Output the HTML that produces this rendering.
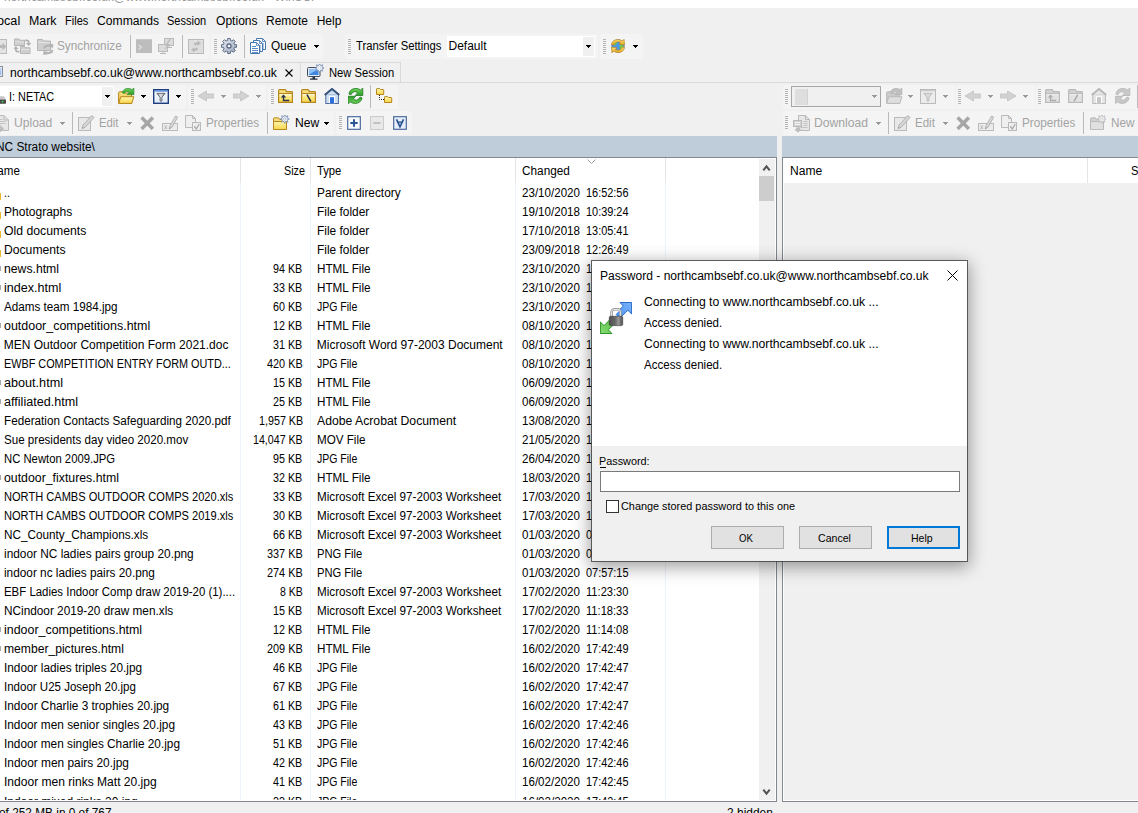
<!DOCTYPE html>
<html lang="en"><head><meta charset="utf-8"><title>WinSCP</title>
<style>

html,body{margin:0;padding:0;}
body{width:1138px;height:813px;overflow:hidden;background:#f0f0f0;font-family:"Liberation Sans",sans-serif;}
#app{position:relative;width:1138px;height:813px;overflow:hidden;background:#f0f0f0;}
#app div,#app span,#app svg,#app button,#app input,#app label{position:absolute;}
#app button,#app input{margin:0;padding:0;font:inherit;-webkit-appearance:none;appearance:none;outline:none;border-radius:0;}
.t{white-space:pre;transform-origin:0 0;color:#000;}
.dis{color:#a3a3a3;}
.vsep{width:1px;background:#b9b9b9;}
.grip{width:3px;background:repeating-linear-gradient(to bottom,#b4b4b4 0,#b4b4b4 1px,transparent 1px,transparent 2px);}
.hl{height:1px;background:#dadada;}
.panel{background:#fff;border:1px solid #828790;box-sizing:border-box;}
.colh{width:1px;background:#e5e5e5;}
.coll{width:1px;background:#eef4fb;}
.btn{box-sizing:border-box;background:#e1e1e1;border:1px solid #adadad;}

</style></head>
<body>
<div id="app">
<svg width="0" height="0" style="left:0;top:0"><defs><linearGradient id="gy" x1="0" y1="0" x2="0" y2="1"><stop offset="0" stop-color="#fff6ae"/><stop offset="1" stop-color="#f8d548"/></linearGradient><linearGradient id="gyb" x1="0" y1="0" x2="0" y2="1"><stop offset="0" stop-color="#fbe38a"/><stop offset="1" stop-color="#e9b935"/></linearGradient><linearGradient id="gd" x1="0" y1="0" x2="0" y2="1"><stop offset="0" stop-color="#e9e9e9"/><stop offset="1" stop-color="#cdcdcd"/></linearGradient><linearGradient id="gg" x1="0" y1="0" x2="1" y2="1"><stop offset="0" stop-color="#f2f4f8"/><stop offset="1" stop-color="#94a0b6"/></linearGradient><linearGradient id="gf" x1="0" y1="0" x2="0" y2="1"><stop offset="0" stop-color="#ffffff"/><stop offset="1" stop-color="#dde9f8"/></linearGradient><linearGradient id="gfu" x1="0" y1="0" x2="1" y2="0"><stop offset="0" stop-color="#8f959d"/><stop offset=".5" stop-color="#dfe2e6"/><stop offset="1" stop-color="#7d838b"/></linearGradient><linearGradient id="ggr" x1="0" y1="0" x2="0" y2="1"><stop offset="0" stop-color="#6fd45a"/><stop offset="1" stop-color="#2f9a2c"/></linearGradient><linearGradient id="gar" x1="0" y1="0" x2="0" y2="1"><stop offset="0" stop-color="#ffe27a"/><stop offset="1" stop-color="#e8a91c"/></linearGradient></defs></svg>
<div style="left:-5px;top:34px;width:214px;height:25px;background:#f4f4f4;border-radius:3px"></div>
<div style="left:211px;top:34px;width:112px;height:25px;background:#f4f4f4;border-radius:3px"></div>
<div style="left:345px;top:34px;width:253px;height:25px;background:#f4f4f4;border-radius:3px"></div>
<div style="left:600px;top:34px;width:43px;height:25px;background:#f4f4f4;border-radius:3px"></div>
<div style="left:-5px;top:85px;width:191px;height:24px;background:#f4f4f4;border-radius:3px"></div>
<div style="left:188px;top:85px;width:78px;height:24px;background:#f4f4f4;border-radius:3px"></div>
<div style="left:268px;top:85px;width:130px;height:24px;background:#f4f4f4;border-radius:3px"></div>
<div style="left:-5px;top:111px;width:339px;height:24px;background:#f4f4f4;border-radius:3px"></div>
<div style="left:336px;top:111px;width:76px;height:24px;background:#f4f4f4;border-radius:3px"></div>
<div style="left:783px;top:85px;width:172px;height:24px;background:#f4f4f4;border-radius:3px"></div>
<div style="left:956px;top:85px;width:79px;height:24px;background:#f4f4f4;border-radius:3px"></div>
<div style="left:1036px;top:85px;width:109px;height:24px;background:#f4f4f4;border-radius:3px"></div>
<div style="left:783px;top:111px;width:362px;height:24px;background:#f4f4f4;border-radius:3px"></div>
<div style="left:0px;top:0px;width:1138px;height:8px;background:#fff;"></div>
<span class="t" id="t0" style="top:-10.16px;font-size:12px;line-height:14px;color:#999;left:4.20px;transform:scaleX(0.9852);">northcambsebf.co.uk@www.northcambsebf.co.uk - WinSCP</span>
<span class="t" id="t1" style="top:13.84px;font-size:12px;line-height:14px;left:-10.30px;transform:scaleX(1.0527);">Local</span>
<span class="t" id="t2" style="top:13.84px;font-size:12px;line-height:14px;left:28.60px;transform:scaleX(1.0310);">Mark</span>
<span class="t" id="t3" style="top:13.84px;font-size:12px;line-height:14px;left:64.70px;transform:scaleX(0.9194);">Files</span>
<span class="t" id="t4" style="top:13.84px;font-size:12px;line-height:14px;left:96.70px;transform:scaleX(1.0121);">Commands</span>
<span class="t" id="t5" style="top:13.84px;font-size:12px;line-height:14px;left:167.20px;transform:scaleX(0.9180);">Session</span>
<span class="t" id="t6" style="top:13.84px;font-size:12px;line-height:14px;left:215.50px;transform:scaleX(1.0058);">Options</span>
<span class="t" id="t7" style="top:13.84px;font-size:12px;line-height:14px;left:266.20px;transform:scaleX(0.9969);">Remote</span>
<span class="t" id="t8" style="top:13.84px;font-size:12px;line-height:14px;left:316.70px;">Help</span>
<svg style="left:-9px;top:38px" width="16" height="16" viewBox="0 0 16 16"><rect x="0.500" y="1.500" width="15" height="14" fill="#e4e4e4" stroke="#bababa"/><path d="M7 7h4.500v-2.500l4 4-4 4v-2.500h-4.500z" fill="#bababa"/></svg>
<svg style="left:14px;top:38px" width="17" height="16" viewBox="0 0 17 16"><path d="M0.5 7.5V1H4.95L6.05 2.3H10.5V7.5Z" fill="#cfcfcf" stroke="#b6b6b6"/><path d="M1 4H10" stroke="#e2e2e2"/><path d="M6.5 15.5V8.5H10.725L11.775 9.8H16V15.5Z" fill="#cfcfcf" stroke="#b6b6b6"/><path d="M7 11.5H15.5" stroke="#e2e2e2"/><path d="M11 2.300h1.500q2.200 0 2.200 2.200v1" fill="none" stroke="#b2b2b2" stroke-width="1.800"/><path d="M11.900 5h5.600l-2.800 3z" fill="#b2b2b2"/><path d="M5.500 13.700h-1.500q-2.200 0-2.200-2.200v-1" fill="none" stroke="#b2b2b2" stroke-width="1.800"/><path d="M-1 11h5.600l-2.800-3z" fill="#b2b2b2"/></svg>
<svg style="left:37px;top:38px" width="17" height="17" viewBox="0 0 17 17"><path d="M0.500 12.500V1.500H5.500L6.500 3H13.500V12.500Z" fill="#cfcfcf" stroke="#b6b6b6"/><path d="M1 4.500H13" stroke="#e2e2e2"/><path d="M7 10.500a4.300 3.300 0 0 1 7.300-2" fill="none" stroke="#b2b2b2" stroke-width="2"/><path d="M12 6l4.500.3-1 4.500z" fill="#b2b2b2"/><path d="M15.500 12a4.300 3.300 0 0 1-7.300 2" fill="none" stroke="#b2b2b2" stroke-width="2"/><path d="M10.500 16.700l-4.500-.3 1-4.500z" fill="#b2b2b2"/></svg>
<span class="t dis" id="t9" style="top:38.84px;font-size:12px;line-height:14px;left:57.20px;transform:scaleX(0.9796);">Synchronize</span>
<div class="vsep" style="left:130px;top:35px;height:23px;"></div>
<svg style="left:136px;top:38px" width="16" height="16" viewBox="0 0 16 16"><rect x="0" y="1" width="16" height="14" fill="#bdbdbd"/><rect x="0" y="1" width="16" height="1" fill="#c9c9c9"/><path d="M2.500 7l3 2.300-3 2.300" fill="none" stroke="#e0e0e0" stroke-width="1.200"/></svg>
<svg style="left:158px;top:38px" width="16" height="16" viewBox="0 0 16 16"><rect x="6.500" y="0.500" width="9" height="7" fill="#dcdcdc" stroke="#bababa"/><rect x="0.500" y="6.500" width="9" height="7" fill="#dcdcdc" stroke="#bababa"/><path d="M5 14v1.500M2 15.500h6M11 8v1.500M9.500 9.500h4.500" stroke="#bababa" fill="none"/><path d="M11.500 1l-4.500 6.500h2l-3.500 5.500 6.500-7h-2.500l3.500-5z" fill="#b9b9b9"/></svg>
<div class="vsep" style="left:182px;top:35px;height:23px;"></div>
<svg style="left:188px;top:38px" width="16" height="16" viewBox="0 0 16 16"><rect x="0.500" y="1.500" width="15" height="14" fill="#dedede" stroke="#bababa"/><path d="M8 2v13" stroke="#ececec"/><path d="M6 6.500q0-2.500 3.500-2.500v-1.500l3.500 2.800-3.500 2.800v-1.600q-1.800 0-1.800 1.500z" fill="#bababa"/><path d="M10 10.500q0 2.500-3.500 2.500v1.500l-3.500-2.800 3.500-2.800v1.600q1.800 0 1.800-1.500z" fill="#bababa"/></svg>
<div class="grip" style="left:214px;top:39px;height:15px"></div>
<svg style="left:221px;top:38px" width="16" height="16" viewBox="0 0 16 16"><path d="M6.70 0.41L9.30 0.41L9.35 2.46L10.96 3.13L12.45 1.71L14.29 3.55L12.87 5.04L13.54 6.65L15.59 6.70L15.59 9.30L13.54 9.35L12.87 10.96L14.29 12.45L12.45 14.29L10.96 12.87L9.35 13.54L9.30 15.59L6.70 15.59L6.65 13.54L5.04 12.87L3.55 14.29L1.71 12.45L3.13 10.96L2.46 9.35L0.41 9.30L0.41 6.70L2.46 6.65L3.13 5.04L1.71 3.55L3.55 1.71L5.04 3.13L6.65 2.46Z" fill="url(#gg)" stroke="#596985" stroke-width="1" stroke-linejoin="round"/><circle cx="8" cy="8" r="2" fill="#fafafa" stroke="#596985" stroke-width="1.300"/></svg>
<div class="vsep" style="left:244px;top:35px;height:23px;"></div>
<svg style="left:249.5px;top:38px" width="16.5" height="16" viewBox="0 0 16.5 16"><path d="M6.5 0.5H12.5L15.5 3.5V11.5H6.5Z" fill="#fdfeff" stroke="#4878b0" stroke-width="1"/><path d="M12.5 0.5V3.5H15.5" fill="none" stroke="#4878b0" stroke-width=".8"/><path d="M13.500 5.500v5" stroke="#5a88c2" stroke-dasharray="1 1"/><path d="M3.5 2.5H9.5L12.5 5.5V13.5H3.5Z" fill="#fdfeff" stroke="#4878b0" stroke-width="1"/><path d="M9.5 2.5V5.5H12.5" fill="none" stroke="#4878b0" stroke-width=".8"/><path d="M10.500 7.500v5" stroke="#5a88c2" stroke-dasharray="1 1"/><path d="M0.5 4.5H6.5L9.5 7.5V15.5H0.5Z" fill="#fdfeff" stroke="#4878b0" stroke-width="1"/><path d="M6.5 4.5V7.5H9.5" fill="none" stroke="#4878b0" stroke-width=".8"/><path d="M2 8.5H6" stroke="#5a88c2"/><path d="M2 10.5H8" stroke="#5a88c2"/><path d="M2 12.5H8" stroke="#5a88c2"/><path d="M2 14.5H8" stroke="#5a88c2"/></svg>
<span class="t" id="t10" style="top:38.84px;font-size:12px;line-height:14px;left:270.50px;transform:scaleX(0.9825);">Queue</span>
<svg style="left:314px;top:45px" width="5" height="3" viewBox="0 0 5 3"><path d="M0 0h5v1h-1v1h-1v1h-1v-1h-1v-1h-1z" fill="#000" shape-rendering="crispEdges"/></svg>
<div class="grip" style="left:347.5px;top:39px;height:15px"></div>
<span class="t" id="t11" style="top:38.84px;font-size:12px;line-height:14px;left:356.00px;transform:scaleX(0.9391);">Transfer Settings</span>
<div style="left:447px;top:36px;width:148px;height:21px;background:#fff;"></div>
<div style="left:583px;top:37px;width:11px;height:19px;background:#f0f0f0;"></div>
<span class="t" id="t12" style="top:38.84px;font-size:12px;line-height:14px;left:448.50px;">Default</span>
<svg style="left:586px;top:45px" width="5" height="3" viewBox="0 0 5 3"><path d="M0 0h5v1h-1v1h-1v1h-1v-1h-1v-1h-1z" fill="#000" shape-rendering="crispEdges"/></svg>
<div class="grip" style="left:603px;top:39px;height:15px"></div>
<svg style="left:610px;top:38px" width="16" height="16" viewBox="0 0 16 16"><circle cx="8" cy="8" r="6.200" fill="#4a97ee" stroke="#2f6fc0" stroke-width=".6"/><path d="M3 6q1-2.500 3.500-3 1.500 1 .5 2.500-1 .5-1.500 2-1.500.5-2.500-1.500zM9.500 7.500q2-1 4 0 .5 2-1 4-1.500 1-2.500-.5-1-2-.5-3.500z" fill="#6ccb52"/><path d="M1.500 6.800q.5-4.800 6-5.300 3 0 4.800 1.500l1.700-1.700.5 5.700-5.500-.8 1.600-1.500q-2-1.500-4.500-.5-1.800 1-1.800 2.600z" fill="url(#gar)" stroke="#b8801a" stroke-width=".7"/><path d="M14.500 9.200q-.5 4.800-6 5.300-3 0-4.800-1.500l-1.700 1.700-.5-5.700 5.500.8-1.600 1.500q2 1.500 4.500.5 1.800-1 1.800-2.600z" fill="url(#gar)" stroke="#b8801a" stroke-width=".7"/></svg>
<svg style="left:633px;top:45px" width="5" height="3" viewBox="0 0 5 3"><path d="M0 0h5v1h-1v1h-1v1h-1v-1h-1v-1h-1z" fill="#000" shape-rendering="crispEdges"/></svg>
<div class="hl" style="left:0;top:62px;width:400px"></div>
<div class="hl" style="left:0;top:82px;width:1138px"></div>
<div class="vsep" style="left:300px;top:62px;height:20px;background:#dadada;"></div>
<div class="vsep" style="left:400px;top:62px;height:20px;background:#dadada;"></div>
<svg style="left:-13px;top:63.7px" width="16" height="16" viewBox="0 0 16 16"><rect x="0.500" y="2.500" width="15" height="10" fill="#e6ebf4" stroke="#8a8f9a"/><rect x="2" y="4" width="12.300" height="7" fill="#9fbff0"/><rect x="2" y="4" width="12.300" height="3" fill="#bcd3f6"/></svg>
<span class="t" id="t13" style="top:65.84px;font-size:12px;line-height:14px;left:9.70px;transform:scaleX(1.0124);">northcambsebf.co.uk@www.northcambsebf.co.uk</span>
<svg style="left:285px;top:69px" width="8" height="8" viewBox="0 0 8 8"><path d="M0.5 0.5L7.5 7.5M7.5 0.5L0.5 7.5" stroke="#000" stroke-width="1.1" fill="none"/></svg>
<svg style="left:306.5px;top:64px" width="17" height="16" viewBox="0 0 17 16"><rect x="0.500" y="3.500" width="12.500" height="9" rx="1" fill="#e4eaf4" stroke="#3f4a5e"/><rect x="2" y="5" width="9.500" height="6" fill="#3f86e0"/><path d="M2 5h9.500l-9.500 5.500z" fill="#8ec0f6"/><path d="M5.500 13h2.500v1.500h2.500v1.200h-7.500v-1.200h2.500z" fill="#27303e"/><path d="M12.50 -0.50L13.46 1.69L15.68 0.82L14.81 3.04L17.00 4.00L14.81 4.96L15.68 7.18L13.46 6.31L12.50 8.50L11.54 6.31L9.32 7.18L10.19 4.96L8.00 4.00L10.19 3.04L9.32 0.82L11.54 1.69Z" fill="#ffffff" stroke="#6f87ad" stroke-width=".8"/><circle cx="12.500" cy="4" r="1.300" fill="#fff" stroke="#a9bbd6" stroke-width=".5"/></svg>
<span class="t" id="t14" style="top:65.84px;font-size:12px;line-height:14px;left:329.00px;transform:scaleX(0.9324);">New Session</span>
<div style="left:0px;top:86px;width:114px;height:21px;background:#fff;"></div>
<div style="left:102px;top:87px;width:11px;height:19px;background:#f0f0f0;"></div>
<svg style="left:-10px;top:90px" width="17" height="16" viewBox="0 0 17 16"><path d="M1 9.500l2-3.200h11l2 3.200z" fill="#c6c6c6"/><rect x="1" y="9.500" width="15" height="4.200" rx=".8" fill="#464646"/><rect x="11.700" y="11" width="1.700" height="1.300" fill="#3cf052"/></svg>
<span class="t" id="t15" style="top:89.84px;font-size:12px;line-height:14px;left:8.70px;transform:scaleX(0.9060);">I: NETAC</span>
<svg style="left:105px;top:95px" width="5" height="3" viewBox="0 0 5 3"><path d="M0 0h5v1h-1v1h-1v1h-1v-1h-1v-1h-1z" fill="#000" shape-rendering="crispEdges"/></svg>
<svg style="left:118px;top:88px" width="16.5" height="16" viewBox="0 0 16.5 16"><path d="M0.600 15.300V4.800Q0.600 3.800 1.600 3.800H5L6 5H12.800Q13.600 5 13.600 5.800V15.300Z" fill="url(#gyb)" stroke="#b5861c"/><path d="M0.700 15.400L2.800 8.700H15.800L13.800 15.400Z" fill="url(#gy)" stroke="#b5861c"/><path d="M4.200 4.800Q5.500 0.400 10 0.400Q12.500 0.400 14 1.600L15.900 0.200V6.600H9.100L11.300 4.300Q10 3.200 8.500 3.500Q6.800 4 6.400 5.400Z" fill="url(#ggr)" stroke="#2a8a27" stroke-width=".7"/></svg>
<svg style="left:141px;top:95px" width="5" height="3" viewBox="0 0 5 3"><path d="M0 0h5v1h-1v1h-1v1h-1v-1h-1v-1h-1z" fill="#000" shape-rendering="crispEdges"/></svg>
<svg style="left:153px;top:89px" width="16" height="15" viewBox="0 0 16 15"><rect x="0.7" y="0.7" width="14.6" height="13.6" fill="url(#gf)" stroke="#1d3d7c" stroke-width="1.4"/><rect x="1.4" y="1.4" width="13.2" height="1.200" fill="#3f7be0"/><path d="M3.800 4.300H12.200L8.900 8.300V12Q8 12.800 7.100 12V8.300Z" fill="url(#gfu)" stroke="#5b6068" stroke-width=".9"/></svg>
<svg style="left:176px;top:95px" width="5" height="3" viewBox="0 0 5 3"><path d="M0 0h5v1h-1v1h-1v1h-1v-1h-1v-1h-1z" fill="#000" shape-rendering="crispEdges"/></svg>
<div class="grip" style="left:191px;top:89px;height:15px"></div>
<svg style="left:198px;top:89px" width="16" height="14" viewBox="0 0 16 14"><path d="M0 7l8.500-5v3h7.500v4h-7.500v3z" fill="#d2d2d2" stroke="#c2c2c2" stroke-width=".8"/></svg>
<svg style="left:221px;top:95px" width="5" height="3" viewBox="0 0 5 3"><path d="M0 0h5v1h-1v1h-1v1h-1v-1h-1v-1h-1z" fill="#9a9a9a" shape-rendering="crispEdges"/></svg>
<svg style="left:232.7px;top:89px" width="16" height="14" viewBox="0 0 16 14"><path d="M16 7l-8.500-5v3h-7.500v4h7.500v3z" fill="#d2d2d2" stroke="#c2c2c2" stroke-width=".8"/></svg>
<svg style="left:256px;top:95px" width="5" height="3" viewBox="0 0 5 3"><path d="M0 0h5v1h-1v1h-1v1h-1v-1h-1v-1h-1z" fill="#9a9a9a" shape-rendering="crispEdges"/></svg>
<div class="grip" style="left:271px;top:89px;height:15px"></div>
<svg style="left:278px;top:88px" width="16" height="16" viewBox="0 0 16 16"><path d="M0.600 14.400V3Q0.600 1.600 1.800 1.600H6.600Q7.500 1.600 7.900 2.500L8.400 3.600H13.600Q14.400 3.600 14.400 4.400V14.400Z" fill="url(#gyb)" stroke="#b5861c" stroke-width="1.200"/><path d="M0.600 5.600H14.400V14.400H0.600Z" fill="url(#gy)" stroke="#b5861c" stroke-width="1.200"/><path d="M1.400 6.700H13.600" stroke="#fffce6" stroke-width="1"/><path d="M5.500 7.300V12.500H11.300" fill="none" stroke="#27324a" stroke-width="1.400"/><path d="M2.800 9.600L5.500 6.600 8.200 9.600Z" fill="#27324a"/></svg>
<svg style="left:301px;top:88px" width="16" height="16" viewBox="0 0 16 16"><path d="M0.600 14.400V3Q0.600 1.600 1.800 1.600H6.600Q7.500 1.600 7.900 2.500L8.400 3.600H13.600Q14.400 3.600 14.400 4.400V14.400Z" fill="url(#gyb)" stroke="#b5861c" stroke-width="1.200"/><path d="M0.600 5.600H14.400V14.400H0.600Z" fill="url(#gy)" stroke="#b5861c" stroke-width="1.200"/><path d="M1.400 6.700H13.600" stroke="#fffce6" stroke-width="1"/><path d="M6.300 7.200L9.500 12.800" stroke="#27324a" stroke-width="1.600" stroke-linecap="round"/></svg>
<svg style="left:324px;top:87.5px" width="16" height="16" viewBox="0 0 16 16"><rect x="1.800" y="6" width="12.600" height="9.500" fill="#cfe0f3" stroke="#4d6c9c" stroke-width="1"/><path d="M8 1.500L1.800 6.500H14.200Z" fill="#cfe0f3"/><rect x="5" y="8.200" width="6" height="7" fill="#ffffff"/><rect x="6" y="9.200" width="4" height="6.300" fill="#2c6fd8"/><path d="M0.700 7L8 0.900 15.300 7" fill="none" stroke="#34507a" stroke-width="1.900" stroke-linejoin="miter"/></svg>
<svg style="left:347.5px;top:88px" width="16" height="16" viewBox="0 0 16 16"><path d="M0.900 5.800Q2.200 0.400 8 0.400Q10.600 0.400 12.400 1.900L14.800 0.200V7.500H7.300L9.600 4.900Q8.300 3.400 6.300 3.700Q3.900 4.200 3.200 6.500Q1.800 7 0.900 5.800Z" fill="url(#ggr)" stroke="#1f7a1f" stroke-width=".8"/><path d="M0.900 5.800Q2.200 0.400 8 0.400Q10.600 0.400 12.400 1.900L14.800 0.200V7.500H7.300L9.600 4.900Q8.300 3.400 6.300 3.700Q3.900 4.200 3.200 6.500Q1.800 7 0.900 5.800Z" fill="url(#ggr)" stroke="#1f7a1f" stroke-width=".8" transform="rotate(180 7.500 7.900)"/></svg>
<div class="vsep" style="left:370px;top:85px;height:23px;"></div>
<svg style="left:376px;top:88px" width="16.5" height="15" viewBox="0 0 16.5 15"><path d="M0.500 6.500V1.200Q0.500 .5 1.200 .5H3.500L4.500 1.500H7Q7.700 1.500 7.700 2.200V6.500Z" fill="url(#gy)" stroke="#b5861c"/><path d="M8.500 14.500V9.200Q8.500 8.500 9.200 8.500H11.500L12.500 9.500H15Q15.700 9.500 15.700 10.200V14.500Z" fill="url(#gy)" stroke="#b5861c"/><path d="M3.500 7v4.500h5" fill="none" stroke="#222" stroke-dasharray="1 1"/></svg>
<svg style="left:-8px;top:115px" width="18" height="18" viewBox="0 0 18 18"><path d="M4.500 0.500H12L16.500 5V15.500H4.500Z" fill="#e6e6e6" stroke="#bababa"/><path d="M12 0.500V5H16.500" fill="none" stroke="#bababa"/><path d="M6.500 4.500h4M6.500 6.500h7M6.500 8.500h7" stroke="#c4c4c4"/><path d="M1 15.500v-3.500h6v-2.500l4.500 4.200-4.500 4.200v-2.400z" fill="#c0c0c0" stroke="#ababab" stroke-width=".6"/></svg>
<span class="t dis" id="t16" style="top:115.84px;font-size:12px;line-height:14px;left:13.50px;transform:scaleX(1.0071);">Upload</span>
<svg style="left:60px;top:122px" width="5" height="3" viewBox="0 0 5 3"><path d="M0 0h5v1h-1v1h-1v1h-1v-1h-1v-1h-1z" fill="#9a9a9a" shape-rendering="crispEdges"/></svg>
<div class="vsep" style="left:72px;top:112px;height:22px;"></div>
<svg style="left:78px;top:115px" width="17" height="16" viewBox="0 0 17 16"><rect x="0.500" y="2.500" width="12" height="13" fill="#e8e8e8" stroke="#bababa"/><path d="M4 13.500l1-3.300 8.300-9.200q.6-.6 1.300 0l.9.800q.6.600 0 1.300l-8.300 9.200z" fill="#d6d6d6" stroke="#ababab" stroke-width=".9"/><path d="M4 13.500l.5-1.600 1.100 1z" fill="#999"/></svg>
<span class="t dis" id="t17" style="top:115.84px;font-size:12px;line-height:14px;left:98.70px;transform:scaleX(0.9426);">Edit</span>
<svg style="left:127px;top:122px" width="5" height="3" viewBox="0 0 5 3"><path d="M0 0h5v1h-1v1h-1v1h-1v-1h-1v-1h-1z" fill="#9a9a9a" shape-rendering="crispEdges"/></svg>
<svg style="left:139.8px;top:115.7px" width="14.5" height="14.5" viewBox="0 0 14.5 14.5"><path d="M1.600 1.600L12.900 12.900M12.900 1.600L1.600 12.900" stroke="#a6a6a6" stroke-width="3.500" stroke-linecap="butt" fill="none"/></svg>
<svg style="left:162px;top:115px" width="17" height="16" viewBox="0 0 17 16"><rect x="0.500" y="8.500" width="15" height="7" fill="#ececec" stroke="#bababa"/><path d="M2.500 10.500l2.500 3.500M5 10.500l-2.500 3.500" stroke="#b0b0b0" stroke-width=".9" fill="none"/><path d="M7.300 14l.8-3.200 5.600-9.800 2 1.200-5.600 9.800z" fill="#dadada" stroke="#ababab" stroke-width=".9"/><path d="M7.300 14l.4-1.700 1 .6z" fill="#999"/></svg>
<svg style="left:185px;top:115px" width="16.5" height="16" viewBox="0 0 16.5 16"><path d="M0.500 0.500H7.500L10.500 3.500V12.500H0.500Z" fill="#efefef" stroke="#bababa"/><path d="M7.500 0.500V3.500H10.500" fill="none" stroke="#bababa"/><rect x="7.500" y="7.500" width="8" height="8" fill="#ececec" stroke="#bababa"/><path d="M9.300 11.500l2 2.300 3-4.800" fill="none" stroke="#ababab" stroke-width="1.300"/></svg>
<span class="t dis" id="t18" style="top:115.84px;font-size:12px;line-height:14px;left:205.90px;transform:scaleX(0.9689);">Properties</span>
<div class="vsep" style="left:267px;top:112px;height:22px;"></div>
<svg style="left:273px;top:114.5px" width="16.5" height="15.5" viewBox="0 0 16.5 15.5"><path d="M0.500 14.500V3.800Q0.500 2.800 1.500 2.800H5Q5.800 2.800 6.200 3.600L6.700 4.500H12.500Q13.500 4.500 13.500 5.500V14.500Z" fill="url(#gyb)" stroke="#b5861c"/><path d="M0.500 6.500H13.500V14Q13.500 14.600 12.900 14.600H1.100Q0.500 14.600 0.500 14Z" fill="url(#gy)" stroke="#b5861c"/><path d="M11.80 -0.50L12.76 1.69L14.98 0.82L14.11 3.04L16.30 4.00L14.11 4.96L14.98 7.18L12.76 6.31L11.80 8.50L10.84 6.31L8.62 7.18L9.49 4.96L7.30 4.00L9.49 3.04L8.62 0.82L10.84 1.69Z" fill="#ffffff" stroke="#6f87ad" stroke-width=".8"/><circle cx="11.800" cy="4" r="1.300" fill="#ffffff" stroke="#6f87ad" stroke-width=".5"/></svg>
<span class="t" id="t19" style="top:115.84px;font-size:12px;line-height:14px;left:294.70px;transform:scaleX(1.0077);">New</span>
<svg style="left:324px;top:122px" width="5" height="3" viewBox="0 0 5 3"><path d="M0 0h5v1h-1v1h-1v1h-1v-1h-1v-1h-1z" fill="#000" shape-rendering="crispEdges"/></svg>
<div class="grip" style="left:339px;top:116px;height:13px"></div>
<svg style="left:346.5px;top:115.5px" width="14" height="14" viewBox="0 0 14 14"><rect x="0.700" y="0.700" width="12.600" height="12.600" fill="#f9fbfe" stroke="#46659a" stroke-width="1.150"/><path d="M7 3.300v7.400M3.300 7h7.400" stroke="#2d5596" stroke-width="2"/></svg>
<svg style="left:370px;top:115.5px" width="14" height="14" viewBox="0 0 14 14"><rect x="0.500" y="0.500" width="13" height="13" fill="#e9e9e9" stroke="#cbcbcb" stroke-width="1"/><path d="M3.300 7h7.400" stroke="#c2c2c2" stroke-width="2"/></svg>
<svg style="left:392.5px;top:115.5px" width="14" height="14" viewBox="0 0 14 14"><rect x="0.700" y="0.700" width="12.600" height="12.600" fill="#e6eef9" stroke="#46659a" stroke-width="1.150"/><path d="M3.500 3.300L7 10.800 10.500 3.300" fill="none" stroke="#2d5596" stroke-width="1.700"/><path d="M4.600 6.200h4.800" stroke="#2d5596" stroke-width="1.400"/></svg>
<div class="grip" style="left:785px;top:89px;height:15px"></div>
<div style="left:791px;top:86px;width:90px;height:21px;background:#f0f0f0;border:1px solid #a6a6a6;box-sizing:border-box;"></div>
<div style="left:795px;top:89px;width:13px;height:15.5px;background:#dedede;border-right:1px solid #d2d2d2;box-sizing:border-box;"></div>
<svg style="left:872px;top:95px" width="5" height="3" viewBox="0 0 5 3"><path d="M0 0h5v1h-1v1h-1v1h-1v-1h-1v-1h-1z" fill="#9a9a9a" shape-rendering="crispEdges"/></svg>
<svg style="left:886px;top:88px" width="16.5" height="16" viewBox="0 0 16.5 16"><path d="M0.600 15.300V4.800Q0.600 3.800 1.600 3.800H5L6 5H12.800Q13.600 5 13.600 5.800V15.300Z" fill="#cacaca" stroke="#bababa"/><path d="M0.700 15.400L2.800 8.700H15.800L13.800 15.400Z" fill="#dedede" stroke="#bababa"/><path d="M4.200 4.800Q5.500 0.400 10 0.400Q12.500 0.400 14 1.600L15.900 0.200V6.600H9.100L11.300 4.300Q10 3.200 8.500 3.500Q6.800 4 6.400 5.400Z" fill="#c0c0c0" stroke="#b0b0b0" stroke-width=".7"/></svg>
<svg style="left:908px;top:95px" width="5" height="3" viewBox="0 0 5 3"><path d="M0 0h5v1h-1v1h-1v1h-1v-1h-1v-1h-1z" fill="#9a9a9a" shape-rendering="crispEdges"/></svg>
<svg style="left:919.5px;top:89px" width="16" height="15" viewBox="0 0 16 15"><rect x="0.5" y="0.5" width="15" height="14" fill="#ececec" stroke="#bababa" stroke-width="1"/><rect x="1" y="1" width="14" height="1.200" fill="#c9c9c9"/><path d="M3.800 4.300H12.200L8.900 8.300V12Q8 12.800 7.100 12V8.300Z" fill="#dadada" stroke="#bababa" stroke-width=".9"/></svg>
<svg style="left:943px;top:95px" width="5" height="3" viewBox="0 0 5 3"><path d="M0 0h5v1h-1v1h-1v1h-1v-1h-1v-1h-1z" fill="#9a9a9a" shape-rendering="crispEdges"/></svg>
<div class="grip" style="left:958px;top:89px;height:15px"></div>
<svg style="left:965px;top:89px" width="16" height="14" viewBox="0 0 16 14"><path d="M0 7l8.500-5v3h7.500v4h-7.500v3z" fill="#d2d2d2" stroke="#c2c2c2" stroke-width=".8"/></svg>
<svg style="left:988px;top:95px" width="5" height="3" viewBox="0 0 5 3"><path d="M0 0h5v1h-1v1h-1v1h-1v-1h-1v-1h-1z" fill="#9a9a9a" shape-rendering="crispEdges"/></svg>
<svg style="left:999.6px;top:89px" width="16" height="14" viewBox="0 0 16 14"><path d="M16 7l-8.500-5v3h-7.500v4h7.500v3z" fill="#d2d2d2" stroke="#c2c2c2" stroke-width=".8"/></svg>
<svg style="left:1023px;top:95px" width="5" height="3" viewBox="0 0 5 3"><path d="M0 0h5v1h-1v1h-1v1h-1v-1h-1v-1h-1z" fill="#9a9a9a" shape-rendering="crispEdges"/></svg>
<div class="grip" style="left:1038px;top:89px;height:15px"></div>
<svg style="left:1045px;top:88px" width="16" height="16" viewBox="0 0 16 16"><path d="M0.600 14.400V3Q0.600 1.600 1.800 1.600H6.600Q7.500 1.600 7.900 2.500L8.400 3.600H13.600Q14.400 3.600 14.400 4.400V14.400Z" fill="#d2d2d2" stroke="#bababa" stroke-width="1.200"/><path d="M0.600 5.600H14.400V14.400H0.600Z" fill="#e2e2e2" stroke="#bababa" stroke-width="1.200"/><path d="M1.400 6.700H13.600" stroke="#f2f2f2" stroke-width="1"/><path d="M5.500 7.300V12.500H11.300" fill="none" stroke="#ababab" stroke-width="1.400"/><path d="M2.800 9.600L5.500 6.600 8.200 9.600Z" fill="#ababab"/></svg>
<svg style="left:1067.5px;top:88px" width="16" height="16" viewBox="0 0 16 16"><path d="M0.600 14.400V3Q0.600 1.600 1.800 1.600H6.600Q7.500 1.600 7.900 2.500L8.400 3.600H13.600Q14.400 3.600 14.400 4.400V14.400Z" fill="#d2d2d2" stroke="#bababa" stroke-width="1.200"/><path d="M0.600 5.600H14.400V14.400H0.600Z" fill="#e2e2e2" stroke="#bababa" stroke-width="1.200"/><path d="M1.400 6.700H13.600" stroke="#f2f2f2" stroke-width="1"/><path d="M9.500 7.200L6.300 12.800" stroke="#ababab" stroke-width="1.500" stroke-linecap="round"/></svg>
<svg style="left:1091px;top:87.5px" width="16" height="16" viewBox="0 0 16 16"><rect x="1.800" y="6" width="12.600" height="9.500" fill="#e6e6e6" stroke="#bababa" stroke-width="1"/><path d="M8 1.500L1.800 6.500H14.200Z" fill="#e6e6e6"/><rect x="5" y="8.200" width="6" height="7" fill="#ffffff"/><rect x="6" y="9.200" width="4" height="6.300" fill="#c6c6c6"/><path d="M0.700 7L8 0.900 15.300 7" fill="none" stroke="#b8b8b8" stroke-width="1.900" stroke-linejoin="miter"/></svg>
<svg style="left:1114.5px;top:88px" width="16" height="16" viewBox="0 0 16 16"><path d="M0.900 5.800Q2.200 0.400 8 0.400Q10.600 0.400 12.400 1.900L14.800 0.200V7.500H7.300L9.600 4.900Q8.300 3.400 6.300 3.700Q3.900 4.200 3.200 6.500Q1.800 7 0.900 5.800Z" fill="#c8c8c8" stroke="#b4b4b4" stroke-width=".8"/><path d="M0.900 5.800Q2.200 0.400 8 0.400Q10.600 0.400 12.400 1.900L14.800 0.200V7.500H7.300L9.600 4.900Q8.300 3.400 6.300 3.700Q3.900 4.200 3.200 6.500Q1.800 7 0.900 5.800Z" fill="#c8c8c8" stroke="#b4b4b4" stroke-width=".8" transform="rotate(180 7.500 7.900)"/></svg>
<div class="vsep" style="left:1137px;top:85px;height:23px;"></div>
<div class="grip" style="left:785px;top:116px;height:13px"></div>
<svg style="left:792.5px;top:115px" width="17" height="18" viewBox="0 0 17 18"><path d="M5.500 0.500H12.500L16.500 4.500V15.500H5.500Z" fill="#e6e6e6" stroke="#bababa"/><path d="M12.500 0.500V4.500H16.500" fill="none" stroke="#bababa"/><path d="M10.500 6.500h4M10.500 8.500h4M10.500 10.500h4M7.500 12.500h7" stroke="#c4c4c4"/><rect x="0.500" y="5.500" width="8" height="6" fill="#d4d4d4" stroke="#bababa"/><path d="M2 7.500h5M2 9.500h5" stroke="#f0f0f0"/><path d="M3 12.500h4v2h2l-4 3-4-3h2z" fill="#bdbdbd"/></svg>
<span class="t dis" id="t20" style="top:115.84px;font-size:12px;line-height:14px;left:813.80px;transform:scaleX(1.0117);">Download</span>
<svg style="left:876px;top:122px" width="5" height="3" viewBox="0 0 5 3"><path d="M0 0h5v1h-1v1h-1v1h-1v-1h-1v-1h-1z" fill="#9a9a9a" shape-rendering="crispEdges"/></svg>
<div class="vsep" style="left:888px;top:112px;height:22px;"></div>
<svg style="left:894px;top:115px" width="17" height="16" viewBox="0 0 17 16"><rect x="0.500" y="2.500" width="12" height="13" fill="#e8e8e8" stroke="#bababa"/><path d="M4 13.500l1-3.300 8.300-9.200q.6-.6 1.300 0l.9.800q.6.600 0 1.300l-8.300 9.200z" fill="#d6d6d6" stroke="#ababab" stroke-width=".9"/><path d="M4 13.500l.5-1.600 1.100 1z" fill="#999"/></svg>
<span class="t dis" id="t21" style="top:115.84px;font-size:12px;line-height:14px;left:914.70px;transform:scaleX(0.9619);">Edit</span>
<svg style="left:943px;top:122px" width="5" height="3" viewBox="0 0 5 3"><path d="M0 0h5v1h-1v1h-1v1h-1v-1h-1v-1h-1z" fill="#9a9a9a" shape-rendering="crispEdges"/></svg>
<svg style="left:955.8px;top:115.7px" width="14.5" height="14.5" viewBox="0 0 14.5 14.5"><path d="M1.600 1.600L12.900 12.900M12.900 1.600L1.600 12.900" stroke="#a6a6a6" stroke-width="3.500" stroke-linecap="butt" fill="none"/></svg>
<svg style="left:978px;top:115px" width="17" height="16" viewBox="0 0 17 16"><rect x="0.500" y="8.500" width="15" height="7" fill="#ececec" stroke="#bababa"/><path d="M2.500 10.500l2.500 3.500M5 10.500l-2.500 3.500" stroke="#b0b0b0" stroke-width=".9" fill="none"/><path d="M7.300 14l.8-3.200 5.600-9.800 2 1.200-5.600 9.800z" fill="#dadada" stroke="#ababab" stroke-width=".9"/><path d="M7.300 14l.4-1.700 1 .6z" fill="#999"/></svg>
<svg style="left:1000.8px;top:115px" width="16.5" height="16" viewBox="0 0 16.5 16"><path d="M0.500 0.500H7.500L10.500 3.500V12.500H0.500Z" fill="#efefef" stroke="#bababa"/><path d="M7.500 0.500V3.500H10.500" fill="none" stroke="#bababa"/><rect x="7.500" y="7.500" width="8" height="8" fill="#ececec" stroke="#bababa"/><path d="M9.300 11.500l2 2.300 3-4.800" fill="none" stroke="#ababab" stroke-width="1.300"/></svg>
<span class="t dis" id="t22" style="top:115.84px;font-size:12px;line-height:14px;left:1021.50px;transform:scaleX(0.9744);">Properties</span>
<div class="vsep" style="left:1083px;top:112px;height:22px;"></div>
<svg style="left:1089.5px;top:114.5px" width="16.5" height="15.5" viewBox="0 0 16.5 15.5"><path d="M0.500 14.500V3.800Q0.500 2.800 1.500 2.800H5Q5.800 2.800 6.200 3.600L6.700 4.500H12.500Q13.500 4.500 13.500 5.500V14.500Z" fill="#d0d0d0" stroke="#bababa"/><path d="M0.500 6.500H13.500V14Q13.500 14.600 12.900 14.600H1.100Q0.500 14.600 0.500 14Z" fill="#e0e0e0" stroke="#bababa"/><path d="M11.80 -0.50L12.76 1.69L14.98 0.82L14.11 3.04L16.30 4.00L14.11 4.96L14.98 7.18L12.76 6.31L11.80 8.50L10.84 6.31L8.62 7.18L9.49 4.96L7.30 4.00L9.49 3.04L8.62 0.82L10.84 1.69Z" fill="#f6f6f6" stroke="#b8b8b8" stroke-width=".8"/><circle cx="11.800" cy="4" r="1.300" fill="#f6f6f6" stroke="#b8b8b8" stroke-width=".5"/></svg>
<span class="t dis" id="t23" style="top:115.84px;font-size:12px;line-height:14px;left:1111.40px;transform:scaleX(0.9785);">New</span>
<div style="left:0px;top:136px;width:777px;height:22px;background:#bfcddb;"></div>
<div style="left:782px;top:136px;width:356px;height:22px;background:#bfcddb;"></div>
<span class="t" id="t24" style="top:139.84px;font-size:12px;line-height:14px;left:-4.30px;transform:scaleX(0.9885);">NC Strato website\</span>
<div class="panel" style="left:-1px;top:157px;width:778px;height:645px"></div>
<div class="colh" style="left:240px;top:158px;height:25px"></div>
<div class="coll" style="left:240px;top:183px;height:617px"></div>
<div class="colh" style="left:310px;top:158px;height:25px"></div>
<div class="coll" style="left:310px;top:183px;height:617px"></div>
<div class="colh" style="left:515px;top:158px;height:25px"></div>
<div class="coll" style="left:515px;top:183px;height:617px"></div>
<div class="colh" style="left:665px;top:158px;height:25px"></div>
<div class="coll" style="left:665px;top:183px;height:617px"></div>
<span class="t" id="t25" style="top:163.84px;font-size:12px;line-height:14px;left:-10.80px;transform:scaleX(0.9652);">Name</span>
<span class="t" id="t26" style="top:163.84px;font-size:12px;line-height:14px;left:284.20px;transform:scaleX(0.8953);">Size</span>
<span class="t" id="t27" style="top:163.84px;font-size:12px;line-height:14px;left:316.80px;transform:scaleX(0.9341);">Type</span>
<span class="t" id="t28" style="top:163.84px;font-size:12px;line-height:14px;left:521.70px;transform:scaleX(0.9832);">Changed</span>
<svg style="left:587px;top:159px" width="9" height="5" viewBox="0 0 9 5"><path d="M0.5 0.5L4.5 4.5L8.5 0.5" stroke="#a0a0a0" stroke-width="1" fill="none"/></svg>
<div id="list" style="left:0;top:183px;width:759px;height:617px;overflow:hidden">
<div style="left:0px;top:10px;width:1px;height:7px;background:#e8b931;"></div>
<span class="t" id="t29" style="top:3.44px;font-size:12px;line-height:14px;left:3.70px;transform:scaleX(0.8843);">..</span>
<span class="t" id="t30" style="top:3.44px;font-size:12px;line-height:14px;left:316.80px;transform:scaleX(0.9870);">Parent directory</span>
<span class="t" id="t31" style="top:3.44px;font-size:12px;line-height:14px;left:521.70px;transform:scaleX(0.9657);">23/10/2020</span>
<span class="t" id="t32" style="top:3.44px;font-size:12px;line-height:14px;left:585.60px;transform:scaleX(0.9097);">16:52:56</span>
<div style="left:0px;top:29px;width:1px;height:7px;background:#e8b931;"></div>
<span class="t" id="t33" style="top:22.44px;font-size:12px;line-height:14px;left:3.70px;transform:scaleX(1.0035);">Photographs</span>
<span class="t" id="t34" style="top:22.44px;font-size:12px;line-height:14px;left:316.80px;transform:scaleX(0.9926);">File folder</span>
<span class="t" id="t35" style="top:22.44px;font-size:12px;line-height:14px;left:521.70px;transform:scaleX(0.9657);">19/10/2018</span>
<span class="t" id="t36" style="top:22.44px;font-size:12px;line-height:14px;left:585.60px;transform:scaleX(0.9097);">10:39:24</span>
<div style="left:0px;top:48px;width:1px;height:7px;background:#e8b931;"></div>
<span class="t" id="t37" style="top:41.44px;font-size:12px;line-height:14px;left:3.70px;transform:scaleX(1.0196);">Old documents</span>
<span class="t" id="t38" style="top:41.44px;font-size:12px;line-height:14px;left:316.80px;transform:scaleX(0.9926);">File folder</span>
<span class="t" id="t39" style="top:41.44px;font-size:12px;line-height:14px;left:521.70px;transform:scaleX(0.9657);">17/10/2018</span>
<span class="t" id="t40" style="top:41.44px;font-size:12px;line-height:14px;left:585.60px;transform:scaleX(0.9097);">13:05:41</span>
<div style="left:0px;top:67px;width:1px;height:7px;background:#e8b931;"></div>
<span class="t" id="t41" style="top:60.44px;font-size:12px;line-height:14px;left:3.70px;transform:scaleX(1.0131);">Documents</span>
<span class="t" id="t42" style="top:60.44px;font-size:12px;line-height:14px;left:316.80px;transform:scaleX(0.9926);">File folder</span>
<span class="t" id="t43" style="top:60.44px;font-size:12px;line-height:14px;left:521.70px;transform:scaleX(0.9657);">23/09/2018</span>
<span class="t" id="t44" style="top:60.44px;font-size:12px;line-height:14px;left:585.60px;transform:scaleX(0.9097);">12:26:49</span>
<div style="left:0px;top:83px;width:1px;height:5px;background:#a8a8a8;"></div>
<span class="t" id="t45" style="top:79.44px;font-size:12px;line-height:14px;left:3.70px;transform:scaleX(1.0179);">news.html</span>
<span class="t" id="t46" style="top:79.44px;font-size:12px;line-height:14px;left:273.46px;transform:scaleX(0.8941);">94 KB</span>
<span class="t" id="t47" style="top:79.44px;font-size:12px;line-height:14px;left:316.80px;transform:scaleX(0.9747);">HTML File</span>
<span class="t" id="t48" style="top:79.44px;font-size:12px;line-height:14px;left:521.70px;transform:scaleX(0.9657);">23/10/2020</span>
<span class="t" id="t49" style="top:79.44px;font-size:12px;line-height:14px;left:585.60px;transform:scaleX(0.9097);">16:52:12</span>
<div style="left:0px;top:102px;width:1px;height:5px;background:#a8a8a8;"></div>
<span class="t" id="t50" style="top:98.44px;font-size:12px;line-height:14px;left:3.70px;transform:scaleX(1.0475);">index.html</span>
<span class="t" id="t51" style="top:98.44px;font-size:12px;line-height:14px;left:273.46px;transform:scaleX(0.8941);">33 KB</span>
<span class="t" id="t52" style="top:98.44px;font-size:12px;line-height:14px;left:316.80px;transform:scaleX(0.9747);">HTML File</span>
<span class="t" id="t53" style="top:98.44px;font-size:12px;line-height:14px;left:521.70px;transform:scaleX(0.9657);">23/10/2020</span>
<span class="t" id="t54" style="top:98.44px;font-size:12px;line-height:14px;left:585.60px;transform:scaleX(0.9097);">16:51:48</span>
<span class="t" id="t55" style="top:117.44px;font-size:12px;line-height:14px;left:3.70px;transform:scaleX(0.9730);">Adams team 1984.jpg</span>
<span class="t" id="t56" style="top:117.44px;font-size:12px;line-height:14px;left:273.46px;transform:scaleX(0.8941);">60 KB</span>
<span class="t" id="t57" style="top:117.44px;font-size:12px;line-height:14px;left:316.80px;transform:scaleX(0.8758);">JPG File</span>
<span class="t" id="t58" style="top:117.44px;font-size:12px;line-height:14px;left:521.70px;transform:scaleX(0.9657);">23/10/2020</span>
<span class="t" id="t59" style="top:117.44px;font-size:12px;line-height:14px;left:585.60px;transform:scaleX(0.9097);">16:40:02</span>
<div style="left:0px;top:140px;width:1px;height:5px;background:#a8a8a8;"></div>
<span class="t" id="t60" style="top:136.44px;font-size:12px;line-height:14px;left:3.70px;transform:scaleX(1.0387);">outdoor_competitions.html</span>
<span class="t" id="t61" style="top:136.44px;font-size:12px;line-height:14px;left:273.46px;transform:scaleX(0.8941);">12 KB</span>
<span class="t" id="t62" style="top:136.44px;font-size:12px;line-height:14px;left:316.80px;transform:scaleX(0.9747);">HTML File</span>
<span class="t" id="t63" style="top:136.44px;font-size:12px;line-height:14px;left:521.70px;transform:scaleX(0.9657);">08/10/2020</span>
<span class="t" id="t64" style="top:136.44px;font-size:12px;line-height:14px;left:585.60px;transform:scaleX(0.9274);">11:20:31</span>
<span class="t" id="t65" style="top:155.44px;font-size:12px;line-height:14px;left:3.70px;">MEN Outdoor Competition Form 2021.doc</span>
<span class="t" id="t66" style="top:155.44px;font-size:12px;line-height:14px;left:273.46px;transform:scaleX(0.8941);">31 KB</span>
<span class="t" id="t67" style="top:155.44px;font-size:12px;line-height:14px;left:316.80px;">Microsoft Word 97-2003 Document</span>
<span class="t" id="t68" style="top:155.44px;font-size:12px;line-height:14px;left:521.70px;transform:scaleX(0.9657);">08/10/2020</span>
<span class="t" id="t69" style="top:155.44px;font-size:12px;line-height:14px;left:585.60px;transform:scaleX(0.9274);">11:18:07</span>
<span class="t" id="t70" style="top:174.44px;font-size:12px;line-height:14px;left:3.70px;transform:scaleX(0.9039);">EWBF COMPETITION ENTRY FORM OUTD...</span>
<span class="t" id="t71" style="top:174.44px;font-size:12px;line-height:14px;left:266.99px;transform:scaleX(0.9069);">420 KB</span>
<span class="t" id="t72" style="top:174.44px;font-size:12px;line-height:14px;left:316.80px;transform:scaleX(0.8758);">JPG File</span>
<span class="t" id="t73" style="top:174.44px;font-size:12px;line-height:14px;left:521.70px;transform:scaleX(0.9657);">08/10/2020</span>
<span class="t" id="t74" style="top:174.44px;font-size:12px;line-height:14px;left:585.60px;transform:scaleX(0.9274);">11:17:44</span>
<div style="left:0px;top:197px;width:1px;height:5px;background:#a8a8a8;"></div>
<span class="t" id="t75" style="top:193.44px;font-size:12px;line-height:14px;left:3.70px;transform:scaleX(1.0527);">about.html</span>
<span class="t" id="t76" style="top:193.44px;font-size:12px;line-height:14px;left:273.46px;transform:scaleX(0.8941);">15 KB</span>
<span class="t" id="t77" style="top:193.44px;font-size:12px;line-height:14px;left:316.80px;transform:scaleX(0.9747);">HTML File</span>
<span class="t" id="t78" style="top:193.44px;font-size:12px;line-height:14px;left:521.70px;transform:scaleX(0.9657);">06/09/2020</span>
<span class="t" id="t79" style="top:193.44px;font-size:12px;line-height:14px;left:585.60px;transform:scaleX(0.9097);">15:02:19</span>
<div style="left:0px;top:216px;width:1px;height:5px;background:#a8a8a8;"></div>
<span class="t" id="t80" style="top:212.44px;font-size:12px;line-height:14px;left:3.70px;transform:scaleX(1.0499);">affiliated.html</span>
<span class="t" id="t81" style="top:212.44px;font-size:12px;line-height:14px;left:273.46px;transform:scaleX(0.8941);">25 KB</span>
<span class="t" id="t82" style="top:212.44px;font-size:12px;line-height:14px;left:316.80px;transform:scaleX(0.9747);">HTML File</span>
<span class="t" id="t83" style="top:212.44px;font-size:12px;line-height:14px;left:521.70px;transform:scaleX(0.9657);">06/09/2020</span>
<span class="t" id="t84" style="top:212.44px;font-size:12px;line-height:14px;left:585.60px;transform:scaleX(0.9097);">15:01:50</span>
<span class="t" id="t85" style="top:231.44px;font-size:12px;line-height:14px;left:3.70px;transform:scaleX(0.9741);">Federation Contacts Safeguarding 2020.pdf</span>
<span class="t" id="t86" style="top:231.44px;font-size:12px;line-height:14px;left:258.50px;transform:scaleX(0.8952);">1,957 KB</span>
<span class="t" id="t87" style="top:231.44px;font-size:12px;line-height:14px;left:316.80px;transform:scaleX(1.0178);">Adobe Acrobat Document</span>
<span class="t" id="t88" style="top:231.44px;font-size:12px;line-height:14px;left:521.70px;transform:scaleX(0.9657);">13/08/2020</span>
<span class="t" id="t89" style="top:231.44px;font-size:12px;line-height:14px;left:585.60px;transform:scaleX(0.9097);">10:12:33</span>
<span class="t" id="t90" style="top:250.44px;font-size:12px;line-height:14px;left:3.70px;transform:scaleX(0.9654);">Sue presidents day video 2020.mov</span>
<span class="t" id="t91" style="top:250.44px;font-size:12px;line-height:14px;left:253.00px;transform:scaleX(0.8868);">14,047 KB</span>
<span class="t" id="t92" style="top:250.44px;font-size:12px;line-height:14px;left:316.80px;transform:scaleX(0.9697);">MOV File</span>
<span class="t" id="t93" style="top:250.44px;font-size:12px;line-height:14px;left:521.70px;transform:scaleX(0.9657);">21/05/2020</span>
<span class="t" id="t94" style="top:250.44px;font-size:12px;line-height:14px;left:585.60px;transform:scaleX(0.9097);">14:25:10</span>
<span class="t" id="t95" style="top:269.44px;font-size:12px;line-height:14px;left:3.70px;transform:scaleX(0.9410);">NC Newton 2009.JPG</span>
<span class="t" id="t96" style="top:269.44px;font-size:12px;line-height:14px;left:273.46px;transform:scaleX(0.8941);">95 KB</span>
<span class="t" id="t97" style="top:269.44px;font-size:12px;line-height:14px;left:316.80px;transform:scaleX(0.8758);">JPG File</span>
<span class="t" id="t98" style="top:269.44px;font-size:12px;line-height:14px;left:521.70px;transform:scaleX(0.9657);">26/04/2020</span>
<span class="t" id="t99" style="top:269.44px;font-size:12px;line-height:14px;left:585.60px;transform:scaleX(0.9097);">12:08:45</span>
<div style="left:0px;top:292px;width:1px;height:5px;background:#a8a8a8;"></div>
<span class="t" id="t100" style="top:288.44px;font-size:12px;line-height:14px;left:3.70px;transform:scaleX(1.0253);">outdoor_fixtures.html</span>
<span class="t" id="t101" style="top:288.44px;font-size:12px;line-height:14px;left:273.46px;transform:scaleX(0.8941);">32 KB</span>
<span class="t" id="t102" style="top:288.44px;font-size:12px;line-height:14px;left:316.80px;transform:scaleX(0.9747);">HTML File</span>
<span class="t" id="t103" style="top:288.44px;font-size:12px;line-height:14px;left:521.70px;transform:scaleX(0.9657);">18/03/2020</span>
<span class="t" id="t104" style="top:288.44px;font-size:12px;line-height:14px;left:585.60px;transform:scaleX(0.9097);">17:31:22</span>
<span class="t" id="t105" style="top:307.44px;font-size:12px;line-height:14px;left:3.70px;transform:scaleX(0.9228);">NORTH CAMBS OUTDOOR COMPS 2020.xls</span>
<span class="t" id="t106" style="top:307.44px;font-size:12px;line-height:14px;left:273.46px;transform:scaleX(0.8941);">33 KB</span>
<span class="t" id="t107" style="top:307.44px;font-size:12px;line-height:14px;left:316.80px;transform:scaleX(0.9741);">Microsoft Excel 97-2003 Worksheet</span>
<span class="t" id="t108" style="top:307.44px;font-size:12px;line-height:14px;left:521.70px;transform:scaleX(0.9657);">17/03/2020</span>
<span class="t" id="t109" style="top:307.44px;font-size:12px;line-height:14px;left:585.60px;transform:scaleX(0.9097);">10:44:16</span>
<span class="t" id="t110" style="top:326.44px;font-size:12px;line-height:14px;left:3.70px;transform:scaleX(0.9228);">NORTH CAMBS OUTDOOR COMPS 2019.xls</span>
<span class="t" id="t111" style="top:326.44px;font-size:12px;line-height:14px;left:273.46px;transform:scaleX(0.8941);">30 KB</span>
<span class="t" id="t112" style="top:326.44px;font-size:12px;line-height:14px;left:316.80px;transform:scaleX(0.9741);">Microsoft Excel 97-2003 Worksheet</span>
<span class="t" id="t113" style="top:326.44px;font-size:12px;line-height:14px;left:521.70px;transform:scaleX(0.9657);">17/03/2020</span>
<span class="t" id="t114" style="top:326.44px;font-size:12px;line-height:14px;left:585.60px;transform:scaleX(0.9097);">10:43:58</span>
<span class="t" id="t115" style="top:345.44px;font-size:12px;line-height:14px;left:3.70px;transform:scaleX(0.9782);">NC_County_Champions.xls</span>
<span class="t" id="t116" style="top:345.44px;font-size:12px;line-height:14px;left:273.46px;transform:scaleX(0.8941);">66 KB</span>
<span class="t" id="t117" style="top:345.44px;font-size:12px;line-height:14px;left:316.80px;transform:scaleX(0.9741);">Microsoft Excel 97-2003 Worksheet</span>
<span class="t" id="t118" style="top:345.44px;font-size:12px;line-height:14px;left:521.70px;transform:scaleX(0.9657);">01/03/2020</span>
<span class="t" id="t119" style="top:345.44px;font-size:12px;line-height:14px;left:585.60px;transform:scaleX(0.9097);">08:01:27</span>
<span class="t" id="t120" style="top:364.44px;font-size:12px;line-height:14px;left:3.70px;transform:scaleX(0.9874);">indoor NC ladies pairs group 20.png</span>
<span class="t" id="t121" style="top:364.44px;font-size:12px;line-height:14px;left:266.99px;transform:scaleX(0.9069);">337 KB</span>
<span class="t" id="t122" style="top:364.44px;font-size:12px;line-height:14px;left:316.80px;transform:scaleX(0.9304);">PNG File</span>
<span class="t" id="t123" style="top:364.44px;font-size:12px;line-height:14px;left:521.70px;transform:scaleX(0.9657);">01/03/2020</span>
<span class="t" id="t124" style="top:364.44px;font-size:12px;line-height:14px;left:585.60px;transform:scaleX(0.9097);">07:57:15</span>
<span class="t" id="t125" style="top:383.44px;font-size:12px;line-height:14px;left:3.70px;transform:scaleX(0.9835);">indoor nc ladies pairs 20.png</span>
<span class="t" id="t126" style="top:383.44px;font-size:12px;line-height:14px;left:266.99px;transform:scaleX(0.9069);">274 KB</span>
<span class="t" id="t127" style="top:383.44px;font-size:12px;line-height:14px;left:316.80px;transform:scaleX(0.9304);">PNG File</span>
<span class="t" id="t128" style="top:383.44px;font-size:12px;line-height:14px;left:521.70px;transform:scaleX(0.9657);">01/03/2020</span>
<span class="t" id="t129" style="top:383.44px;font-size:12px;line-height:14px;left:585.60px;transform:scaleX(0.9097);">07:57:15</span>
<span class="t" id="t130" style="top:402.44px;font-size:12px;line-height:14px;left:3.70px;transform:scaleX(0.9518);">EBF Ladies Indoor Comp draw 2019-20 (1)....</span>
<span class="t" id="t131" style="top:402.44px;font-size:12px;line-height:14px;left:279.93px;transform:scaleX(0.8752);">8 KB</span>
<span class="t" id="t132" style="top:402.44px;font-size:12px;line-height:14px;left:316.80px;transform:scaleX(0.9741);">Microsoft Excel 97-2003 Worksheet</span>
<span class="t" id="t133" style="top:402.44px;font-size:12px;line-height:14px;left:521.70px;transform:scaleX(0.9657);">17/02/2020</span>
<span class="t" id="t134" style="top:402.44px;font-size:12px;line-height:14px;left:585.60px;transform:scaleX(0.9274);">11:23:30</span>
<span class="t" id="t135" style="top:421.44px;font-size:12px;line-height:14px;left:3.70px;transform:scaleX(0.9832);">NCindoor 2019-20 draw men.xls</span>
<span class="t" id="t136" style="top:421.44px;font-size:12px;line-height:14px;left:273.46px;transform:scaleX(0.8941);">15 KB</span>
<span class="t" id="t137" style="top:421.44px;font-size:12px;line-height:14px;left:316.80px;transform:scaleX(0.9741);">Microsoft Excel 97-2003 Worksheet</span>
<span class="t" id="t138" style="top:421.44px;font-size:12px;line-height:14px;left:521.70px;transform:scaleX(0.9657);">17/02/2020</span>
<span class="t" id="t139" style="top:421.44px;font-size:12px;line-height:14px;left:585.60px;transform:scaleX(0.9274);">11:18:33</span>
<div style="left:0px;top:444px;width:1px;height:5px;background:#a8a8a8;"></div>
<span class="t" id="t140" style="top:440.44px;font-size:12px;line-height:14px;left:3.70px;transform:scaleX(1.0352);">indoor_competitions.html</span>
<span class="t" id="t141" style="top:440.44px;font-size:12px;line-height:14px;left:273.46px;transform:scaleX(0.8941);">12 KB</span>
<span class="t" id="t142" style="top:440.44px;font-size:12px;line-height:14px;left:316.80px;transform:scaleX(0.9747);">HTML File</span>
<span class="t" id="t143" style="top:440.44px;font-size:12px;line-height:14px;left:521.70px;transform:scaleX(0.9657);">17/02/2020</span>
<span class="t" id="t144" style="top:440.44px;font-size:12px;line-height:14px;left:585.60px;transform:scaleX(0.9274);">11:14:08</span>
<div style="left:0px;top:463px;width:1px;height:5px;background:#a8a8a8;"></div>
<span class="t" id="t145" style="top:459.44px;font-size:12px;line-height:14px;left:3.70px;transform:scaleX(1.0099);">member_pictures.html</span>
<span class="t" id="t146" style="top:459.44px;font-size:12px;line-height:14px;left:266.99px;transform:scaleX(0.9069);">209 KB</span>
<span class="t" id="t147" style="top:459.44px;font-size:12px;line-height:14px;left:316.80px;transform:scaleX(0.9747);">HTML File</span>
<span class="t" id="t148" style="top:459.44px;font-size:12px;line-height:14px;left:521.70px;transform:scaleX(0.9657);">16/02/2020</span>
<span class="t" id="t149" style="top:459.44px;font-size:12px;line-height:14px;left:585.60px;transform:scaleX(0.9097);">17:42:49</span>
<span class="t" id="t150" style="top:478.44px;font-size:12px;line-height:14px;left:3.70px;transform:scaleX(0.9858);">Indoor ladies triples 20.jpg</span>
<span class="t" id="t151" style="top:478.44px;font-size:12px;line-height:14px;left:273.46px;transform:scaleX(0.8941);">46 KB</span>
<span class="t" id="t152" style="top:478.44px;font-size:12px;line-height:14px;left:316.80px;transform:scaleX(0.8758);">JPG File</span>
<span class="t" id="t153" style="top:478.44px;font-size:12px;line-height:14px;left:521.70px;transform:scaleX(0.9657);">16/02/2020</span>
<span class="t" id="t154" style="top:478.44px;font-size:12px;line-height:14px;left:585.60px;transform:scaleX(0.9097);">17:42:47</span>
<span class="t" id="t155" style="top:497.44px;font-size:12px;line-height:14px;left:3.70px;transform:scaleX(0.9597);">Indoor U25 Joseph 20.jpg</span>
<span class="t" id="t156" style="top:497.44px;font-size:12px;line-height:14px;left:273.46px;transform:scaleX(0.8941);">67 KB</span>
<span class="t" id="t157" style="top:497.44px;font-size:12px;line-height:14px;left:316.80px;transform:scaleX(0.8758);">JPG File</span>
<span class="t" id="t158" style="top:497.44px;font-size:12px;line-height:14px;left:521.70px;transform:scaleX(0.9657);">16/02/2020</span>
<span class="t" id="t159" style="top:497.44px;font-size:12px;line-height:14px;left:585.60px;transform:scaleX(0.9097);">17:42:47</span>
<span class="t" id="t160" style="top:516.44px;font-size:12px;line-height:14px;left:3.70px;transform:scaleX(0.9866);">Indoor Charlie 3 trophies 20.jpg</span>
<span class="t" id="t161" style="top:516.44px;font-size:12px;line-height:14px;left:273.46px;transform:scaleX(0.8941);">61 KB</span>
<span class="t" id="t162" style="top:516.44px;font-size:12px;line-height:14px;left:316.80px;transform:scaleX(0.8758);">JPG File</span>
<span class="t" id="t163" style="top:516.44px;font-size:12px;line-height:14px;left:521.70px;transform:scaleX(0.9657);">16/02/2020</span>
<span class="t" id="t164" style="top:516.44px;font-size:12px;line-height:14px;left:585.60px;transform:scaleX(0.9097);">17:42:47</span>
<span class="t" id="t165" style="top:535.44px;font-size:12px;line-height:14px;left:3.70px;transform:scaleX(0.9859);">Indoor men senior singles 20.jpg</span>
<span class="t" id="t166" style="top:535.44px;font-size:12px;line-height:14px;left:273.46px;transform:scaleX(0.8941);">43 KB</span>
<span class="t" id="t167" style="top:535.44px;font-size:12px;line-height:14px;left:316.80px;transform:scaleX(0.8758);">JPG File</span>
<span class="t" id="t168" style="top:535.44px;font-size:12px;line-height:14px;left:521.70px;transform:scaleX(0.9657);">16/02/2020</span>
<span class="t" id="t169" style="top:535.44px;font-size:12px;line-height:14px;left:585.60px;transform:scaleX(0.9097);">17:42:46</span>
<span class="t" id="t170" style="top:554.44px;font-size:12px;line-height:14px;left:3.70px;transform:scaleX(0.9844);">Indoor men singles Charlie 20.jpg</span>
<span class="t" id="t171" style="top:554.44px;font-size:12px;line-height:14px;left:273.46px;transform:scaleX(0.8941);">51 KB</span>
<span class="t" id="t172" style="top:554.44px;font-size:12px;line-height:14px;left:316.80px;transform:scaleX(0.8758);">JPG File</span>
<span class="t" id="t173" style="top:554.44px;font-size:12px;line-height:14px;left:521.70px;transform:scaleX(0.9657);">16/02/2020</span>
<span class="t" id="t174" style="top:554.44px;font-size:12px;line-height:14px;left:585.60px;transform:scaleX(0.9097);">17:42:46</span>
<span class="t" id="t175" style="top:573.44px;font-size:12px;line-height:14px;left:3.70px;transform:scaleX(0.9907);">Indoor men pairs 20.jpg</span>
<span class="t" id="t176" style="top:573.44px;font-size:12px;line-height:14px;left:273.46px;transform:scaleX(0.8941);">42 KB</span>
<span class="t" id="t177" style="top:573.44px;font-size:12px;line-height:14px;left:316.80px;transform:scaleX(0.8758);">JPG File</span>
<span class="t" id="t178" style="top:573.44px;font-size:12px;line-height:14px;left:521.70px;transform:scaleX(0.9657);">16/02/2020</span>
<span class="t" id="t179" style="top:573.44px;font-size:12px;line-height:14px;left:585.60px;transform:scaleX(0.9097);">17:42:46</span>
<span class="t" id="t180" style="top:592.44px;font-size:12px;line-height:14px;left:3.70px;transform:scaleX(1.0041);">Indoor men rinks Matt 20.jpg</span>
<span class="t" id="t181" style="top:592.44px;font-size:12px;line-height:14px;left:273.46px;transform:scaleX(0.8941);">41 KB</span>
<span class="t" id="t182" style="top:592.44px;font-size:12px;line-height:14px;left:316.80px;transform:scaleX(0.8758);">JPG File</span>
<span class="t" id="t183" style="top:592.44px;font-size:12px;line-height:14px;left:521.70px;transform:scaleX(0.9657);">16/02/2020</span>
<span class="t" id="t184" style="top:592.44px;font-size:12px;line-height:14px;left:585.60px;transform:scaleX(0.9097);">17:42:45</span>
<span class="t" id="t185" style="top:612.44px;font-size:12px;line-height:14px;left:3.70px;transform:scaleX(0.9964);">Indoor mixed rinks 20.jpg</span>
<span class="t" id="t186" style="top:612.44px;font-size:12px;line-height:14px;left:273.46px;transform:scaleX(0.8941);">33 KB</span>
<span class="t" id="t187" style="top:612.44px;font-size:12px;line-height:14px;left:316.80px;transform:scaleX(0.8758);">JPG File</span>
<span class="t" id="t188" style="top:612.44px;font-size:12px;line-height:14px;left:521.70px;transform:scaleX(0.9657);">16/02/2020</span>
<span class="t" id="t189" style="top:612.44px;font-size:12px;line-height:14px;left:585.60px;transform:scaleX(0.9097);">17:42:45</span>
</div>
<div style="left:759px;top:159px;width:16px;height:641px;background:#f0f0f0;"></div>
<div style="left:759px;top:176px;width:15px;height:25px;background:#cdcdcd;"></div>
<svg style="left:762px;top:164px" width="9" height="8" viewBox="0 0 9 8"><path d="M1.300 6.300L4.500 2.300L7.700 6.300" stroke="#505050" stroke-width="2" fill="none"/></svg>
<svg style="left:762px;top:788px" width="9" height="8" viewBox="0 0 9 8"><path d="M1.300 1.700L4.500 5.700L7.700 1.700" stroke="#505050" stroke-width="2" fill="none"/></svg>
<div class="panel" style="left:782px;top:157px;width:360px;height:645px;background:#fff"></div>
<div style="left:784px;top:183px;width:355px;height:617px;background:#f0f0f0;"></div>
<div class="colh" style="left:1087px;top:158px;height:25px"></div>
<span class="t" id="t190" style="top:163.84px;font-size:12px;line-height:14px;left:789.90px;transform:scaleX(1.0058);">Name</span>
<span class="t" id="t191" style="top:163.84px;font-size:12px;line-height:14px;left:1131.40px;transform:scaleX(0.9296);">Size</span>
<span class="t" id="t192" style="top:805.84px;font-size:12px;line-height:14px;left:-21.80px;transform:scaleX(0.9858);">0 B of 252 MB in 0 of 767</span>
<span class="t" id="t193" style="top:805.84px;font-size:12px;line-height:14px;left:727.20px;transform:scaleX(0.9968);">2 hidden</span>
<div id="dlg" style="left:592px;top:261px;width:375px;height:300px;background:#f0f0f0;box-shadow:0 0 0 1px rgba(60,60,60,.8),0 4px 16px 2px rgba(0,0,0,.38)">
<div style="left:0px;top:0px;width:375px;height:185px;background:#fff;"></div>
<span class="t" id="t194" style="top:7.84px;font-size:12px;line-height:14px;left:7.60px;transform:scaleX(1.0046);">Password - northcambsebf.co.uk@www.northcambsebf.co.uk</span>
<svg style="left:354.5px;top:9px" width="11" height="11" viewBox="0 0 11 11"><path d="M0.5 0.5L10.5 10.5M10.5 0.5L0.5 10.5" stroke="#000" stroke-width="1" fill="none"/></svg>
<svg style="left:8px;top:41px" width="32" height="32" viewBox="0 0 32 32"><defs><linearGradient id="gl" x1="0" y1="0" x2="1" y2="0"><stop offset="0" stop-color="#4e4e4e"/><stop offset=".45" stop-color="#6a6a6a"/><stop offset=".7" stop-color="#9a9a9a"/><stop offset=".85" stop-color="#6a6a6a"/><stop offset="1" stop-color="#555"/></linearGradient><linearGradient id="gb" x1="0" y1="1" x2="1" y2="0"><stop offset="0" stop-color="#4a90ee"/><stop offset="1" stop-color="#79b2fa"/></linearGradient><linearGradient id="gn" x1="1" y1="0" x2="0" y2="1"><stop offset="0" stop-color="#4ab838"/><stop offset="1" stop-color="#86dc72"/></linearGradient></defs><path d="M20 0.500H31.600V11.900L27.800 8.300L18 18L13.600 13.600L23.300 4Z" fill="url(#gb)" stroke="#1d5fc0" stroke-width=".9" stroke-linejoin="round"/><path d="M0.400 20V31.500H11.900L8.400 27.800L18 18.200L13.800 13.800L4 23.600Z" fill="url(#gn)" stroke="#1f8a1c" stroke-width=".9" stroke-linejoin="round"/><path d="M11.600 15V10.500Q11.600 7.300 14.800 7.300H17.200Q20.400 7.300 20.400 10.500V15" fill="#fff" stroke="#8e8e8e" stroke-width="2.600"/><path d="M15.500 12.500L19.300 8.700V14.500H17.500Z" fill="#4a90ee"/><path d="M11.600 15V10.500Q11.600 7.300 14.800 7.300H17.200Q20.400 7.300 20.400 10.500V15" fill="none" stroke="#e4e4e4" stroke-width="1.200"/><rect x="9.300" y="14.300" width="13.400" height="9.300" rx="1.300" fill="url(#gl)" stroke="#454545" stroke-width=".7"/></svg>
<span class="t" id="t195" style="top:34.04px;font-size:12px;line-height:14px;left:51.50px;transform:scaleX(1.0165);">Connecting to www.northcambsebf.co.uk ...</span>
<span class="t" id="t196" style="top:55.04px;font-size:12px;line-height:14px;left:51.50px;transform:scaleX(0.9608);">Access denied.</span>
<span class="t" id="t197" style="top:76.04px;font-size:12px;line-height:14px;left:51.50px;transform:scaleX(1.0165);">Connecting to www.northcambsebf.co.uk ...</span>
<span class="t" id="t198" style="top:97.04px;font-size:12px;line-height:14px;left:51.50px;transform:scaleX(0.9608);">Access denied.</span>
<span class="t" id="t199" style="top:193.69px;font-size:11px;line-height:13px;left:6.70px;transform:scaleX(0.9852);">Password:</span>
<div style="left:8px;top:205.5px;width:6px;height:1px;background:#000;"></div>
<input type="password" aria-label="Password" style="left:8px;top:210px;width:360px;height:21px;background:#fff;border:1px solid #7a7a7a;box-sizing:border-box">
<input type="checkbox" aria-label="Change stored password to this one" style="left:14px;top:239px;width:13px;height:13px;background:#fff;border:1px solid #333;box-sizing:border-box">
<span class="t" id="t200" style="top:239.29px;font-size:11px;line-height:13px;left:29.00px;transform:scaleX(0.9886);">Change stored password to this one</span>
<button type="button" class="btn" style="left:119px;top:265px;width:73px;height:23px">
<span class="t" id="t201" style="top:4.99px;font-size:11px;line-height:13px;left:27.20px;transform:scaleX(0.8739);">OK</span>
</button>
<button type="button" class="btn" style="left:207px;top:265px;width:73px;height:23px">
<span class="t" id="t202" style="top:4.99px;font-size:11px;line-height:13px;left:17.70px;transform:scaleX(0.9606);">Cancel</span>
</button>
<button type="button" class="btn" style="left:295px;top:265px;width:73px;height:23px;border:2px solid #0078d7">
<span class="t" id="t203" style="top:3.99px;font-size:11px;line-height:13px;left:22.40px;transform:scaleX(0.9591);">Help</span>
</button>
</div>
</div>
</body></html>
